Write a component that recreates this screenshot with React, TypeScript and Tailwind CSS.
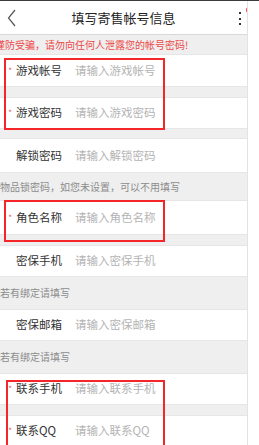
import React from "react";

const font = { fontFamily: '"Noto Sans CJK SC", "Noto Sans", sans-serif' };

function Row({ label, placeholder, required, h = "h-[32px]" }: { label: string; placeholder: string; required?: boolean; h?: string }) {
  return (
    <div className={`relative flex items-center bg-white border-y border-[#e6e6e6] ${h}`}>
      <div className="w-[16px] flex justify-end pr-[4px]">
        {required && <span className="text-[8px] leading-none text-[#e8555a]">*</span>}
      </div>
      <div className="w-[59px] text-[11.5px] text-[#333] leading-none">{label}</div>
      <div className="text-[11.5px] text-[#b4b4b4] leading-none">{placeholder}</div>
    </div>
  );
}

function Hint({ text, h }: { text: string; h: string }) {
  return (
    <div className={`flex items-center bg-[#efefef] ${h} overflow-hidden`}>
      <span className="text-[10px] text-[#8c8c8c] whitespace-nowrap leading-none">{text}</span>
    </div>
  );
}

function Gap({ h }: { h: string }) {
  return <div className={`bg-[#efefef] ${h}`} />;
}

export default function App() {
  return (
    <div className="w-[259px] h-[445px] overflow-hidden bg-white relative" style={font}>
      <div className="h-[1px] bg-[#3a3a3a]" />
      <div className="flex">
        <div className="w-[248px] border-r border-[#e3e3e3] relative overflow-hidden">
          {/* header */}
          <div className="relative h-[34px] flex items-center justify-center bg-white border-b border-[#d8d8d8]">
            <svg className="absolute left-[7px] top-[8px]" width="10" height="18" viewBox="0 0 10 18">
              <polyline points="8,1 1.5,9 8,17" fill="none" stroke="#555" strokeWidth="1.2" />
            </svg>
            <span className="text-[13px] text-[#222] leading-none">填写寄售帐号信息</span>
            <div className="absolute left-[239px] top-[11px] flex flex-col gap-[3.5px]">
              <div className="w-[2px] h-[2px] bg-[#333]" />
              <div className="w-[2px] h-[2px] bg-[#333]" />
              <div className="w-[2px] h-[2px] bg-[#333]" />
            </div>
            <div className="absolute left-[246px] top-[6px] w-[6px] h-[6px] rounded-full bg-[#f03c3c]" />
          </div>
          {/* warning */}
          <div className="h-[19px] bg-[#efefef] flex items-center overflow-hidden">
            <span className="ml-[-5px] text-[10px] text-[#ec4a48] whitespace-nowrap leading-none">谨防受骗，请勿向任何人泄露您的帐号密码!</span>
          </div>
          <Row label="游戏帐号" placeholder="请输入游戏帐号" required h="h-[33px]" />
          <Gap h="h-[10px]" />
          <Row label="游戏密码" placeholder="请输入游戏密码" required />
          <Gap h="h-[9px]" />
          <Row label="解锁密码" placeholder="请输入解锁密码" h="h-[35px]" />
          <Hint text="物品锁密码，如您未设置，可以不用填写" h="h-[27px]" />
          <Row label="角色名称" placeholder="请输入角色名称" required h="h-[35px]" />
          <Gap h="h-[10px]" />
          <Row label="密保手机" placeholder="请输入密保手机" />
          <Hint text="若有绑定请填写" h="h-[32px]" />
          <Row label="密保邮箱" placeholder="请输入密保邮箱" />
          <Hint text="若有绑定请填写" h="h-[32px]" />
          <Row label="联系手机" placeholder="请输入联系手机" required />
          <Gap h="h-[10px]" />
          <Row label="联系QQ" placeholder="请输入联系QQ" required />
        </div>
        <div className="flex-1 bg-white" />
      </div>
      {/* annotation boxes */}
      <div className="absolute left-[4px] top-[58px] w-[161px] h-[72px] border-[2px] border-[#f5262a]" />
      <div className="absolute left-[4px] top-[200px] w-[161px] h-[42px] border-[2px] border-[#f5262a]" />
      <div className="absolute left-[6px] top-[380px] w-[159px] h-[70px] border-[2px] border-[#f5262a]" />
    </div>
  );
}
